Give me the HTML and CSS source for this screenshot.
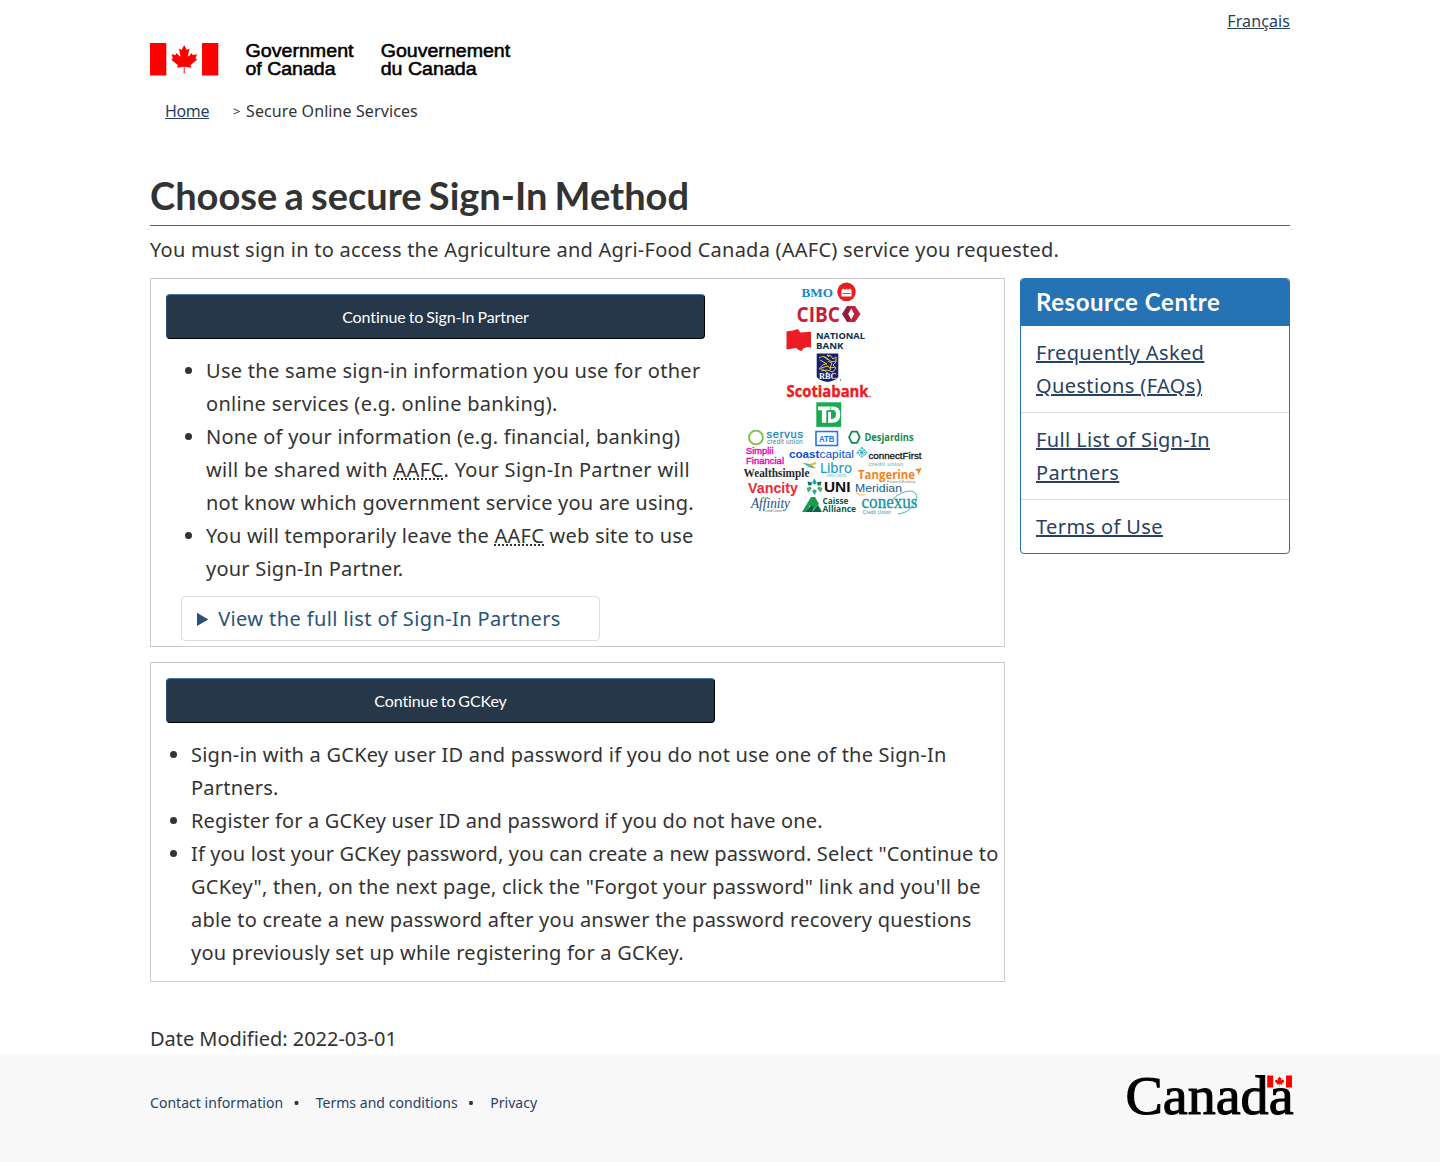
FILE: index.html
```html
<!DOCTYPE html>
<html lang="en">
<head>
<meta charset="utf-8">
<title>Choose a secure Sign-In Method</title>
<link rel="stylesheet" href="styles.css">
</head>
<body>
<svg width="0" height="0" class="defs" aria-hidden="true">
  <symbol id="leaf" viewBox="-2030 -2030 4060 4060">
    <path d="m-90 2030 45-863a95 95 0 0 0-111-98l-859 151 116-320a65 65 0 0 0-20-73l-941-762 212-99a65 65 0 0 0 34-79l-186-572 542 115a65 65 0 0 0 73-38l105-247 423 454a65 65 0 0 0 111-57l-204-1052 327 189a65 65 0 0 0 91-27l332-652 332 652a65 65 0 0 0 91 27l327-189-204 1052a65 65 0 0 0 111 57l423-454 105 247a65 65 0 0 0 73 38l542-115-186 572a65 65 0 0 0 34 79l212 99-941 762a65 65 0 0 0-20 73l116 320-859-151a95 95 0 0 0-111 98l45 863z"/>
  </symbol>
</svg>
<header class="container header">
  <div class="lang"><a href="#">Français</a></div>
  <svg class="brand" width="366" height="40" viewBox="0 0 366 40" role="img" aria-label="Government of Canada">
    <g fill="#f00">
      <path d="M0 1h16.300v32.500H0zM52 1h16.300v32.500H52z"/>
      <use href="#leaf" x="19.900" y="2.800" width="28.600" height="28.600"/>
    </g>
    <g class="brand-text">
      <text x="95.500" y="14.900" textLength="108" lengthAdjust="spacingAndGlyphs">Government</text>
      <text x="95.500" y="33.400" textLength="90" lengthAdjust="spacingAndGlyphs">of Canada</text>
      <text x="230.700" y="14.900" textLength="129.500" lengthAdjust="spacingAndGlyphs">Gouvernement</text>
      <text x="230.700" y="33.400" textLength="96" lengthAdjust="spacingAndGlyphs">du Canada</text>
    </g>
  </svg>
  <nav class="crumbs"><a href="#">Home</a><span class="sep">&gt;</span><span class="here">Secure Online Services</span></nav>
</header>
<main class="container">
  <h1>Choose a secure Sign-In Method</h1>
  <p class="intro">You must sign in to access the Agriculture and Agri-Food Canada (AAFC) service you requested.</p>
  <div class="columns">
    <div class="methods">
      <section class="method partner">
        <div class="partner-info">
          <button class="btn">Continue to Sign-In Partner</button>
          <ul>
            <li>Use the same sign-in information you use for other online services (e.g. online banking).</li>
            <li>None of your information (e.g. financial, banking) <span class="loose">will be shared with <abbr>AAFC</abbr>. Your Sign-In Partner will</span> not know which government service you are using.</li>
            <li>You will temporarily leave the <abbr>AAFC</abbr> web site to use your Sign-In Partner.</li>
          </ul>
          <details><summary>View the full list of Sign-In Partners</summary></details>
        </div>
        <svg class="logos" width="185" height="240" viewBox="740 279 185 240" role="img" aria-label="Sign-In Partners">
          <text class="serif bold" x="801.500" y="296.500" font-size="12.500" fill="#1487c8" textLength="31.500" lengthAdjust="spacingAndGlyphs">BMO</text>
          <circle cx="846.500" cy="291.800" r="9.300" fill="#ed1c24"/>
          <path d="M841.500 296.500v-6.500l2-1.500 1.500 1.500 1.500-1.500 1.500 1.500 1.500-1.500 2 1.500v6.500z" fill="#fff"/>
          <path d="M842.500 293.500h8" stroke="#ed1c24" stroke-width=".9"/>
          <text class="open bold" x="796.500" y="321.500" font-size="20.500" fill="#c41f3e" textLength="43.500" lengthAdjust="spacingAndGlyphs">CIBC</text>
          <path d="M842 314l5-8h7l-5 8 5 8h-7z" fill="#8b1d41"/>
          <path d="M848 306h7l5.500 8-5.500 8h-7l5.500-8z" fill="#c41f3e"/>
          <path d="M851.200 308.500l3 5.500-3 5.500-3-5.500z" fill="#fff"/>
          <path d="M786.500 331.500c4-.5 7-1 11-2.500l3 3.500 10.500-.8v15.800l-3.500-.5-4 1.300-2 2.700c-2.500-.5-4-2-5.500-3l-9.500 1.500z" fill="#ed1c24"/>
          <g class="open bold" font-size="9.600" fill="#0b2e4b"><text x="816" y="339" textLength="49" lengthAdjust="spacingAndGlyphs">NATIONAL</text><text x="816" y="348.500" textLength="27.500" lengthAdjust="spacingAndGlyphs">BANK</text></g>
          <path d="M816.700 353.500h21.600v23q-1 3.500-10.800 5.500-9.800-2-10.800-5.500z" fill="#16206f"/>
          <path d="M819 358c3-2 6-2 9 1s5 3 8 2M820 360l7 4c-5 0-6 3-8 5 5-1 6 3 9 4M829 357l-2-2 4 1 2 3 3-2v5l-3 3 3 3-3 4-6-2-6 1M828 361l4 2-2 5 5-1M823 356l5 4M821 368l7-2 3 4" fill="none" stroke="#e8ce37" stroke-width="1"/>
          <text class="serif bold" x="819" y="379.200" font-size="8" fill="#fff" textLength="17.500" lengthAdjust="spacingAndGlyphs">RBC</text><circle cx="840.500" cy="380" r=".7" fill="#555"/>
          <text class="open bold" x="786.500" y="397.300" font-size="16.500" fill="#ed1c24" stroke="#ed1c24" stroke-width=".4" textLength="82" lengthAdjust="spacingAndGlyphs">Scotiabank</text><circle cx="870" cy="396.500" r=".8" fill="#ed1c24"/>
          <path d="M816.300 402.300h24.900v24.600h-24.900z" fill="#18ab4f"/>
          <path d="M818 406.500h12v3.800h-3.700v12.500h-4.400v-12.500H818zM828 412h3v7h1q4-.2 4-4.700t-4-4.200h-1.500v-3.600h2.500q7.300.2 7.300 7.900 0 8.100-8 8.300H828z" fill="#fff"/>
          <circle cx="756" cy="437.500" r="6.900" fill="none" stroke="#7ac143" stroke-width="1.900"/>
          <g fill="#2484bd"><text class="sans" x="766.500" y="438" font-size="11" stroke="#2484bd" stroke-width=".3" textLength="36.500">servus</text><text class="sans" x="767" y="443.800" font-size="6.300" textLength="35.500">credit union</text></g>
          <rect x="816" y="431.500" width="21.500" height="14" fill="#fff" stroke="#2177e8" stroke-width="1.600"/><text class="sans bold" x="819" y="442" font-size="9" fill="#1574ea" textLength="15.500" lengthAdjust="spacingAndGlyphs">ATB</text>
          <path d="M851.800 431.600h5.200l2.700 5.600-2.700 5.600h-5.200l-2.700-5.600z" fill="none" stroke="#16884e" stroke-width="1.800"/>
          <text class="open bold" x="864.500" y="440.800" font-size="10" fill="#16884e" textLength="49" lengthAdjust="spacingAndGlyphs">Desjardins</text>
          <g class="sans" fill="#eb08b4" stroke="#eb08b4" stroke-width=".4" font-size="9.200"><text x="746" y="454.200" textLength="27.500" lengthAdjust="spacingAndGlyphs">Simplii</text><text x="746" y="464" textLength="38" lengthAdjust="spacingAndGlyphs">Financial</text></g>
          <g class="sans" fill="#0c50cf" font-size="11.500"><text class="bold" x="789" y="457.700" textLength="30.500" lengthAdjust="spacingAndGlyphs">coast</text><text x="819.500" y="457.700" textLength="34.500" lengthAdjust="spacingAndGlyphs">capital</text></g>
          <path d="M862 447.500l5 5-5 5-5-5zM859.500 450l5 5M864.500 450l-5 5M862 448v9M857.500 452.500h9" fill="none" stroke="#37b5b8" stroke-width="1.100" stroke-dasharray="1.500 .6"/>
          <text class="sans" x="868.500" y="458.700" font-size="9.200" fill="#151515" stroke="#151515" stroke-width=".3" textLength="53" lengthAdjust="spacingAndGlyphs">connectFirst</text><text class="sans" x="868.700" y="465.700" font-size="6" fill="#3fb2b6" textLength="34.500">credit union</text>
          <path d="M802.500 463q7 .5 9 1.700 2 2.500 5 3.500-8 0-11-3.500z" fill="#52b3af"/><path d="M810 465l6-2" stroke="#e4be27" stroke-width="2"/>
          <text class="open" x="820" y="472.700" font-size="14" fill="#1694be" stroke="#1694be" stroke-width=".2" textLength="32" lengthAdjust="spacingAndGlyphs">Libro</text><text class="sans" x="826" y="476.800" font-size="2.700" fill="#46a8c5" textLength="20">CREDIT UNION</text>
          <text class="serif bold" x="743.500" y="477" font-size="11.500" fill="#29292b" textLength="66" lengthAdjust="spacingAndGlyphs">Wealthsimple</text>
          <text class="open bold" x="858" y="478.700" font-size="12.500" fill="#f58220" textLength="57" lengthAdjust="spacingAndGlyphs">Tangerine</text><path d="M914.500 469.500l7-1.500-3 7-1-4z" fill="#f58220"/><text class="sans" x="887" y="483.200" font-size="3.700" fill="#888" textLength="28">Forward Banking</text>
          <text class="sans bold" x="748" y="492.500" font-size="14" fill="#ec2936" textLength="50" lengthAdjust="spacingAndGlyphs">Vancity</text>
          <path d="M814.500 478.200l2.300 4.800-2.300 1.500-2.300-1.500zM814.500 495l-2.300-4.300 2.300-1.500 2.300 1.500z" fill="#16a99f"/><path d="M807.500 481.500l4.300.8-.2 3-3.200.3zM821.500 481.500l-4.300.8.2 3 3.200.3z" fill="#0c7465"/><path d="M806.500 488l4-1.500 1.200 2.200-3.500 3.800zM822.500 488l-4-1.500-1.200 2.200 3.500 3.800z" fill="#4daf65"/>
          <text class="sans bold" x="824" y="492.200" font-size="15" fill="#111" textLength="26.500" lengthAdjust="spacingAndGlyphs">UNI</text>
          <text class="sans" x="855" y="492.200" font-size="11.500" fill="#155c9b" textLength="47" lengthAdjust="spacingAndGlyphs">Meridian</text><path d="M856 493q4 3.500 9 1.500" fill="none" stroke="#e8bb3e"/>
          <text class="serif italic" x="751" y="508" font-size="14" fill="#174e82" textLength="39" lengthAdjust="spacingAndGlyphs">Affinity</text><text class="sans" x="764" y="512" font-size="3.600" fill="#777" textLength="18">Credit Union</text>
          <path d="M802 512l9-15h4l4 7-5 5-4-4-3 7z" fill="#189b55"/><path d="M806 512l5-7 3 3-2 4zM812 512l6-7 4 7z" fill="#096546"/>
          <g class="open bold" fill="#075f43" font-size="8.500"><text x="822.500" y="503.500" textLength="26" lengthAdjust="spacingAndGlyphs">Caisse</text><text x="822.500" y="512" textLength="33.500" lengthAdjust="spacingAndGlyphs">Alliance</text></g>
          <text class="serif" x="861.500" y="507.500" font-size="19" fill="#1693a3" stroke="#1693a3" stroke-width=".3" textLength="56" lengthAdjust="spacingAndGlyphs">conexus</text><text class="sans" x="862.500" y="513.500" font-size="4.800" fill="#1693a3" textLength="28.500">Credit Union</text>
          <path d="M893 499c7-7 19-11 23-5 4 8-7 19-18 20" fill="none" stroke="#33a6b4" stroke-width=".9"/>
        </svg>
      </section>
      <section class="method gckey">
        <button class="btn">Continue to GCKey</button>
        <ul>
          <li>Sign-in with a GCKey user ID and password if you do not use one of the Sign-In Partners.</li>
          <li class="snug">Register for a GCKey user ID and password if you do not have one.</li>
          <li><span class="snug">If you lost your GCKey password, you can create a new password. Select "Continue to</span> GCKey", then, on the next page, click the "Forgot your password" link and you'll be able to create a new password after you answer the password recovery questions you previously set up while registering for a GCKey.</li>
        </ul>
      </section>
    </div>
    <aside class="panel">
      <h2>Resource Centre</h2>
      <a href="#">Frequently Asked Questions (FAQs)</a>
      <a href="#">Full List of Sign-In Partners</a>
      <a href="#">Terms of Use</a>
    </aside>
  </div>
  <p class="modified">Date Modified: 2022-03-01</p>
</main>
<footer>
  <div class="container foot">
    <nav class="foot-links"><a href="#">Contact information</a><span>•</span><a href="#">Terms and conditions</a><span>•</span><a href="#">Privacy</a></nav>
    <svg class="wordmark" width="172" height="56" viewBox="-2 0 172 56" role="img" aria-label="Canada">
      <text class="serif" x="-.500" y="39" font-size="55" textLength="168" lengthAdjust="spacingAndGlyphs" stroke="#000" stroke-width="1.100">Canada</text>
      <path d="M140.500 0h27.500v13h-27.500z" fill="#f8f8f8"/>
      <g fill="#f00"><path d="M141.200.5h6v12h-6zM160 .5h6v12h-6z"/><use href="#leaf" x="148.400" y="1.300" width="10.400" height="10.400"/></g>
    </svg>
  </div>
</footer>
</body>
</html>
```
FILE: styles.css
```css
* { box-sizing: border-box; }
body { margin: 0; background: #fff; color: #333; font: 20px/33px "Noto Sans", sans-serif; }
a { color: #284162; }
p, h1, h2, ul { margin: 0; }
.defs { display: block; }
.container { width: 1140px; margin: 0 auto; }
.header { height: 171px; }
.lang { height: 42px; padding-top: 9px; text-align: right; font-size: 16px; line-height: 24px; letter-spacing: .1px; }
.brand { display: block; overflow: visible; }
.brand-text { font: 18.7px "Liberation Sans", sans-serif; fill: #000; stroke: #000; stroke-width: .55; }
.crumbs { display: flex; padding: 17px 15px 0; font-size: 16px; line-height: 24px; }
.crumbs a { width: 44px; letter-spacing: -.35px; }
.crumbs .sep { width: 13px; margin-left: 24px; font-size: 13px; }
.crumbs .here { letter-spacing: .1px; }
h1 { height: 55px; border-bottom: 1px solid #af3c43; font: bold 38px/48px Lato, sans-serif; letter-spacing: 0; word-spacing: -2px; }
.intro { padding: 7px 0 12px; letter-spacing: .23px; }
.columns { display: flex; gap: 15px; align-items: flex-start; }
.methods { width: 855px; display: flex; flex-direction: column; gap: 15px; }
.method { border: 1px solid #ccc; padding: 15px 0 0 15px; letter-spacing: .23px; }
.partner { display: flex; height: 369px; }
.partner-info { width: 539px; }
.gckey { height: 320px; }
.btn { display: block; width: 100%; height: 45px; background: #26374a; color: #fff; border: 1px solid; border-color: #417aa9 #000 #000 #335075; border-radius: 4px; font: 16px Lato, sans-serif; letter-spacing: -.1px; word-spacing: -1px; padding: 0; }
.gckey .btn { width: 549px; }
.method ul { margin-top: 15px; padding-left: 25px; }
.partner ul { padding-left: 40px; }
.partner li:first-child { letter-spacing: .29px; }
.snug { letter-spacing: .14px; }
.loose { letter-spacing: .34px; }
abbr { text-decoration: underline dotted; }
details { width: 419px; height: 45px; margin: 11px 0 0 15px; padding: 5px 15px; border: 1px solid #ddd; border-radius: 4px; color: #295376; letter-spacing: .38px; }
.logos { margin: -15px 0 0 35px; flex: none; letter-spacing: 0; }
.sans { font-family: "Liberation Sans", sans-serif; }
.serif { font-family: "Liberation Serif", serif; }
.open { font-family: "Open Sans", sans-serif; }
.bold { font-weight: bold; }
.italic { font-style: italic; }
.panel { width: 270px; border: 1px solid #2572b4; border-radius: 4px; overflow: hidden; letter-spacing: .38px; }
.panel h2 { height: 47px; padding-left: 15px; background: #2572b4; color: #fff; font: bold 24px/46px Lato, sans-serif; letter-spacing: .55px; }
.panel a { display: block; padding: 10px 15px; border-bottom: 1px solid #ddd; }
.panel a:last-child { border-bottom: 0; }
.modified { padding-top: 40px; letter-spacing: -.04px; }
footer { height: 107px; background: #f8f8f8; }
.foot { display: flex; justify-content: space-between; }
.foot-links { display: flex; padding-top: 36px; font-size: 14px; line-height: 23px; letter-spacing: .04px; }
.foot-links a { text-decoration: none; }
.foot-links span { width: 32.500px; padding-left: 10px; font-size: 17px; }
.wordmark { margin: 20px -6px 0 0; overflow: visible; }
```
